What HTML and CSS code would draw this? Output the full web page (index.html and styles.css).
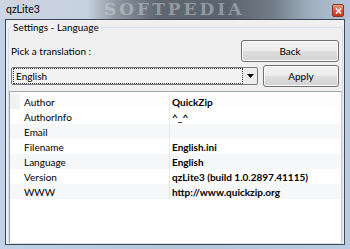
FILE: index.html
```html
<!DOCTYPE html>
<html>
<head>
<meta charset="utf-8">
<link rel="stylesheet" href="styles.css">
</head>
<body>
<div class="window">
  <div class="titlebar">
    <span class="title">qzLite3</span>
    <span class="watermark">SOFTPEDIA</span>
    <span class="close"><svg width="7" height="6" viewBox="0 0 7 6"><path d="M1 0.5 L6 5.5 M6 0.5 L1 5.5" stroke="#fff" stroke-width="1.5"/></svg></span>
  </div>
  <div class="client">
    <fieldset class="group">
      <legend>Settings - Language</legend>
      <div class="row1">
        <span class="label">Pick a translation :</span>
        <button class="btn back">Back</button>
      </div>
      <div class="row2">
        <div class="combo">
          <span class="combo-text">English</span>
          <span class="arrow"><svg width="7" height="4" viewBox="0 0 7 4"><path d="M0 0 H7 L3.5 4 Z" fill="#000"/></svg></span>
        </div>
        <button class="btn apply">Apply</button>
      </div>
      <div class="list">
        <div class="item"><span class="k">Author</span><span class="v">QuickZip</span></div>
        <div class="item alt"><span class="k">AuthorInfo</span><span class="v">^_^</span></div>
        <div class="item"><span class="k">Email</span><span class="v"></span></div>
        <div class="item alt"><span class="k">Filename</span><span class="v">English.ini</span></div>
        <div class="item"><span class="k">Language</span><span class="v">English</span></div>
        <div class="item alt"><span class="k">Version</span><span class="v">qzLite3 (build 1.0.2897.41115)</span></div>
        <div class="item"><span class="k">WWW</span><span class="v">http://www.quickzip.org</span></div>
      </div>
    </fieldset>
  </div>
</div>
</body>
</html>
```
FILE: styles.css
```css
html, body { margin: 0; padding: 0; }
body { width: 350px; height: 249px; overflow: hidden; font-family: "Lato", "Noto Sans", sans-serif; font-size: 10px; color: #000; }
.window {
  width: 350px; height: 249px; box-sizing: border-box;
  background: linear-gradient(90deg, #bfd2e8 0%, #b4c6da 50%, #b9cce2 100%);
  padding: 0 5px 4px 5px;
  display: flex; flex-direction: column;
}
.titlebar {
  height: 19px; flex: none; position: relative; display: flex; align-items: center; overflow: hidden;
  background: linear-gradient(90deg, #cdd7e3 0%, #c6d1de 25%, #8f98a2 33%, #5f6770 45%, #5b636c 65%, #737d88 78%, #9eadbd 88%, #b6c6d8 100%);
  margin: 0 -5px; padding: 0 6px;
}
.title { font-size: 10.5px; color: #000; position: relative; z-index: 1; margin-top: -1px; }
.watermark { position: absolute; left: 104px; top: 0; font-size: 17px; line-height: 18px; font-weight: bold; letter-spacing: 3px; color: rgba(215,220,228,0.45); font-family: "DejaVu Serif", serif; }
.close {
  position: absolute; right: 6px; top: 4px; width: 12px; height: 13px; box-sizing: border-box;
  background: linear-gradient(#e9a08c, #d35a3f 50%, #c4391c);
  border: 1px solid #8a3524; border-radius: 2px;
  display: flex; align-items: center; justify-content: center;
}
.client {
  flex: 1; background: #f0f0f0; border: 1px solid #3e4854;
  padding: 1px 1px 0 2px;
  display: flex; min-height: 0;
}
.group {
  flex: 1; margin: 0; border: 1px solid #d5dfe5; border-radius: 3px;
  padding: 0; display: flex; flex-direction: column; min-width: 0;
}
.group legend { padding: 0 2px; margin-left: 2px; font-size: 10px; line-height: 12px; }
.row1 { display: flex; justify-content: space-between; align-items: center; height: 22px; margin: 7px 3px 0 2px; }
.label { font-size: 10px; }
.btn {
  font-family: inherit; font-size: 10px; color: #000;
  border: 1px solid #707070; border-radius: 3px;
  background: linear-gradient(#f3f3f3 0%, #ececec 48%, #dedede 52%, #d2d2d2 100%);
  box-shadow: inset 0 0 0 1px #fbfbfb; padding: 0; height: 22px;
}
.back { width: 98px; }
.row2 { display: flex; align-items: center; justify-content: space-between; margin: 3px 3px 0 2px; height: 22px; }
.combo {
  width: 247px; height: 18px; box-sizing: border-box; border: 1px solid #7a7a7a; border-radius: 2px; background: #ececec;
  display: flex; align-items: center;
}
.combo-text { flex: 1; height: 14px; margin: 1px 0 1px 1px; border: 1px dotted #444; padding-left: 2px; line-height: 14px; background: #f2f2f2; }
.arrow { width: 14px; display: flex; justify-content: center; align-items: center; height: 16px; }
.apply { width: 76px; }
.list {
  margin: 4px 0 0 0; flex: 1; background: #fff; border: 1px solid #a0a6ae; border-right-color: #c9d2dc; border-bottom: none;
  padding: 2px 0 0 0;
}
.item { display: flex; height: 15px; align-items: center; background: #f6f7f9; }
.item.alt { background: #fff; }
.item .k { width: 159px; padding-left: 13px; box-sizing: border-box; border-left: 1px solid transparent; height: 100%; display: flex; align-items: center; }
.item .v { flex: 1; font-weight: bold; border-left: 1px solid #e6e9ee; padding-left: 2px; height: 100%; display: flex; align-items: center; }
.list .item:first-child { background: linear-gradient(90deg, #f2f2f2 0 10px, #fdfdfd 10px); }
```
